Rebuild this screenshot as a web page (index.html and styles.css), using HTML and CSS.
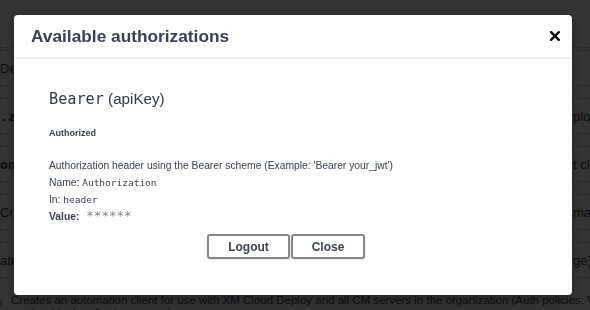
FILE: index.html
```html
<!DOCTYPE html>
<html>
<head>
<meta charset="utf-8">
<link rel="stylesheet" href="styles.css">
</head>
<body>
<div class="page">
  <div class="page-head"></div>
  <div class="op-row">
    <div class="op-left">Delete client</div>
    <div class="op-right"></div>
  </div>
  <div class="op-row">
    <div class="op-left bold">.zapi/clients</div>
    <div class="op-right">ploy</div>
  </div>
  <div class="op-row">
    <div class="op-left bold">onnections</div>
    <div class="op-right">t clie</div>
  </div>
  <div class="op-row">
    <div class="op-left">Create</div>
    <div class="op-right">mana</div>
  </div>
  <div class="op-row">
    <div class="op-left">ate</div>
    <div class="op-right">ge)</div>
  </div>
  <div class="op-desc">
    <span class="op-mark">/</span>
    <p>Creates an automation client for use with XM Cloud Deploy and all CM servers in the organization (Auth policies: Valid<br>xmclouddeploy.clients.manage)</p>
  </div>
</div>

<div class="overlay">
  <div class="modal">
    <div class="modal-header">
      <h3 class="modal-title">Available authorizations</h3>
      <button class="close-btn" aria-label="Close">
        <svg width="10" height="10" viewBox="0 0 10 10"><path d="M1.2 1.2 L8.8 8.8 M8.8 1.2 L1.2 8.8" stroke="#111" stroke-width="2.4" stroke-linecap="square"/></svg>
      </button>
    </div>
    <div class="modal-body">
      <div class="auth">
        <h4 class="auth-title"><code>Bearer</code> (apiKey)</h4>
        <h6 class="auth-state">Authorized</h6>
        <p class="auth-line">Authorization header using the Bearer scheme (Example: 'Bearer your_jwt')</p>
        <p class="auth-line">Name: <code>Authorization</code></p>
        <p class="auth-line">In: <code>header</code></p>
        <div class="auth-value"><label>Value:</label> <code class="stars">******</code></div>
      </div>
      <div class="btn-wrap">
        <button class="btn">Logout</button>
        <button class="btn btn-done">Close</button>
      </div>
    </div>
  </div>
</div>
</body>
</html>
```

FILE: styles.css
```css
html, body {
  margin: 0;
  padding: 0;
  width: 590px;
  height: 310px;
  overflow: hidden;
  background: #fff;
  font-family: "Liberation Sans", Arial, sans-serif;
  color: #3b4151;
}

/* page behind the modal */
.page {
  width: 590px;
}
.page-head {
  height: 47px;
  border-bottom: 1px dashed #bbb;
  margin-bottom: 2px;
}
.op-row {
  display: flex;
  justify-content: space-between;
  height: 34px;
  border-top: 1px dashed #bbb;
  border-bottom: 1px dashed #bbb;
  margin-bottom: 12px;
  font-size: 13px;
  color: #3b4151;
}
.op-left {
  width: 14px;
  white-space: nowrap;
  overflow: hidden;
  display: flex;
  align-items: center;
}
.op-left.bold {
  font-weight: 700;
  font-family: "DejaVu Sans Mono", monospace;
}
.op-right {
  width: 17px;
  white-space: nowrap;
  overflow: hidden;
  display: flex;
  align-items: center;
}
.op-desc {
  display: flex;
  margin-top: -1px;
  font-size: 11.5px;
  line-height: 12px;
}
.op-mark {
  width: 11px;
  flex: none;
  padding-top: 8px;
  font-size: 9px;
}
.op-desc p {
  margin: 5px 0 0;
  white-space: nowrap;
}

/* overlay + modal */
.overlay {
  position: fixed;
  inset: 0;
  background: rgba(0, 0, 0, 0.8);
  padding: 15px 18px 0 14px;
}
.modal {
  width: 558px;
  height: 280px;
  background: #fff;
  border-radius: 4px;
  box-shadow: 0 4px 12px rgba(0, 0, 0, 0.3);
}
.modal-header {
  height: 42px;
  display: flex;
  align-items: center;
  justify-content: space-between;
  padding: 0 11px 0 17px;
  border-bottom: 2px solid #f0f0f0;
}
.modal-title {
  margin: 0;
  font-size: 17.3px;
  font-weight: 700;
  color: #3b4151;
}
.close-btn {
  background: none;
  border: 0;
  padding: 0;
  width: 11px;
  height: 10px;
  display: flex;
}
.modal-body {
  padding-top: 30px;
}
.auth {
  padding-left: 35px;
}
.auth-title {
  margin: 0;
  font-size: 15.2px;
  line-height: 20px;
  font-weight: 400;
  color: #333845;
}
.auth-title code {
  font-family: "DejaVu Sans Mono", monospace;
  font-size: 15.2px;
}
.auth-state {
  margin: 18px 0 0;
  font-size: 9px;
  line-height: 12px;
  font-weight: 700;
}
.auth-line {
  margin: 0;
  font-size: 10.3px;
  line-height: 17px;
}
.auth-state + .auth-line {
  margin-top: 18px;
}
.auth-line code {
  font-family: "DejaVu Sans Mono", monospace;
  font-size: 9.5px;
}
.auth-value {
  display: flex;
  align-items: center;
  height: 17px;
  font-size: 10.3px;
}
.auth-value label {
  font-weight: 700;
  margin-right: 7px;
}
.stars {
  font-family: "DejaVu Sans Mono", monospace;
  font-size: 12.5px;
  color: #858585;
  position: relative;
  top: -1px;
}
.btn-wrap {
  display: flex;
  justify-content: center;
  gap: 1px;
  margin-top: 9px;
}
.btn {
  height: 25px;
  padding: 0;
  background: #fff;
  border: 2px solid #858585;
  border-radius: 3px;
  box-shadow: 0 1px 2px rgba(0, 0, 0, 0.1);
  font-family: "Liberation Sans", Arial, sans-serif;
  font-size: 12px;
  font-weight: 700;
  color: #3b4151;
}
.btn:first-child {
  width: 83px;
}
.btn-done {
  width: 74px;
  margin-right: 14px;
}
```
